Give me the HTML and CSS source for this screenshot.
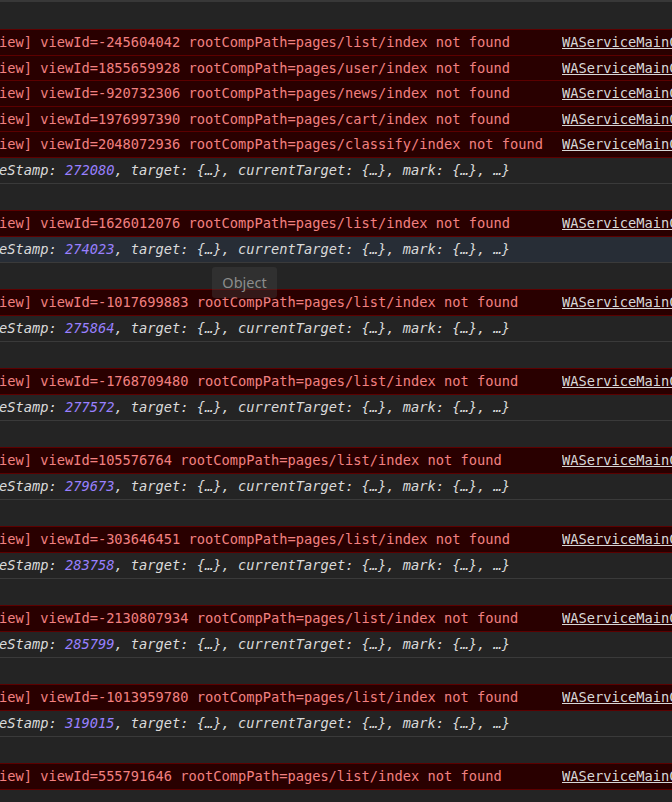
FILE: index.html
```html
<!DOCTYPE html>
<html lang="en">
<head>
    <meta charset="UTF-8">
    <meta name="viewport" content="width=device-width, initial-scale=1.0">
    <title>Console</title>
    <link rel="stylesheet" href="styles.css">
</head>
<body>
<div class="console">
    <div class="top-edge"></div>
    <div class="blank first"></div>

    <div class="msg err"><span class="text">iew] viewId=-245604042 rootCompPath=pages/list/index not found</span><a class="src" href="#">WAServiceMainContext.js:1</a></div>
    <div class="msg err"><span class="text">iew] viewId=1855659928 rootCompPath=pages/user/index not found</span><a class="src" href="#">WAServiceMainContext.js:1</a></div>
    <div class="msg err"><span class="text">iew] viewId=-920732306 rootCompPath=pages/news/index not found</span><a class="src" href="#">WAServiceMainContext.js:1</a></div>
    <div class="msg err"><span class="text">iew] viewId=1976997390 rootCompPath=pages/cart/index not found</span><a class="src" href="#">WAServiceMainContext.js:1</a></div>
    <div class="msg err"><span class="text">iew] viewId=2048072936 rootCompPath=pages/classify/index not found</span><a class="src" href="#">WAServiceMainContext.js:1</a></div>
    <div class="msg info"><span class="text">eStamp: <span class="num">272080</span>, target: {…}, currentTarget: {…}, mark: {…}, …}</span></div>
    <div class="blank"></div>

    <div class="msg err"><span class="text">iew] viewId=1626012076 rootCompPath=pages/list/index not found</span><a class="src" href="#">WAServiceMainContext.js:1</a></div>
    <div class="msg info hover"><span class="text">eStamp: <span class="num">274023</span>, target: {…}, currentTarget: {…}, mark: {…}, …}</span></div>
    <div class="blank"></div>

    <div class="msg err"><span class="text">iew] viewId=-1017699883 rootCompPath=pages/list/index not found</span><a class="src" href="#">WAServiceMainContext.js:1</a></div>
    <div class="msg info"><span class="text">eStamp: <span class="num">275864</span>, target: {…}, currentTarget: {…}, mark: {…}, …}</span></div>
    <div class="blank"></div>

    <div class="msg err"><span class="text">iew] viewId=-1768709480 rootCompPath=pages/list/index not found</span><a class="src" href="#">WAServiceMainContext.js:1</a></div>
    <div class="msg info"><span class="text">eStamp: <span class="num">277572</span>, target: {…}, currentTarget: {…}, mark: {…}, …}</span></div>
    <div class="blank"></div>

    <div class="msg err"><span class="text">iew] viewId=105576764 rootCompPath=pages/list/index not found</span><a class="src" href="#">WAServiceMainContext.js:1</a></div>
    <div class="msg info"><span class="text">eStamp: <span class="num">279673</span>, target: {…}, currentTarget: {…}, mark: {…}, …}</span></div>
    <div class="blank"></div>

    <div class="msg err"><span class="text">iew] viewId=-303646451 rootCompPath=pages/list/index not found</span><a class="src" href="#">WAServiceMainContext.js:1</a></div>
    <div class="msg info"><span class="text">eStamp: <span class="num">283758</span>, target: {…}, currentTarget: {…}, mark: {…}, …}</span></div>
    <div class="blank"></div>

    <div class="msg err"><span class="text">iew] viewId=-2130807934 rootCompPath=pages/list/index not found</span><a class="src" href="#">WAServiceMainContext.js:1</a></div>
    <div class="msg info"><span class="text">eStamp: <span class="num">285799</span>, target: {…}, currentTarget: {…}, mark: {…}, …}</span></div>
    <div class="blank"></div>

    <div class="msg err"><span class="text">iew] viewId=-1013959780 rootCompPath=pages/list/index not found</span><a class="src" href="#">WAServiceMainContext.js:1</a></div>
    <div class="msg info"><span class="text">eStamp: <span class="num">319015</span>, target: {…}, currentTarget: {…}, mark: {…}, …}</span></div>
    <div class="blank"></div>

    <div class="msg err"><span class="text">iew] viewId=555791646 rootCompPath=pages/list/index not found</span><a class="src" href="#">WAServiceMainContext.js:1</a></div>

    <!-- hover tooltip over the preview -->
    <div class="tooltip">Object</div>
</div>
</body>
</html>
```

FILE: styles.css
```css
html, body {
    margin: 0;
    padding: 0;
    background-color: #242424;
    overflow: hidden;
}

.console {
    position: relative;
    display: flex;
    flex-direction: column;
    font-family: "DejaVu Sans Mono", "Liberation Mono", monospace;
    font-size: 13.7px;
    color: #d4d4d4;
}

.top-edge {
    height: 2px;
    background-color: #383838;
}

.blank {
    height: 26.5px;
    flex-shrink: 0;
}

.blank.first {
    height: 27px;
}

.msg {
    box-sizing: border-box;
    display: grid;
    grid-template-columns: 562px 1fr;
    align-items: center;
    flex-shrink: 0;
    white-space: nowrap;
    overflow: hidden;
}

.msg .text {
    margin-left: -1px;
    overflow: hidden;
}

.err {
    height: 26.5px;
    background-color: #290000;
    border-top: 1px solid #5c0000;
    border-bottom: 1px solid #5c0000;
    color: #f28080;
}

.err + .err {
    margin-top: -1px;
}

.info {
    height: 26px;
    border-bottom: 1px solid #3a3a3a;
    font-style: italic;
    color: #dadada;
}

.info.hover {
    background-color: #272d36;
}

.num {
    color: #9980ff;
}

.src {
    color: #d8d8d8;
    text-decoration: underline;
    overflow: hidden;
}

.tooltip {
    position: absolute;
    left: 212px;
    top: 267px;
    width: 65px;
    height: 31px;
    box-sizing: border-box;
    border-radius: 3px;
    background-color: rgba(72, 72, 72, 0.35);
    color: #8c8c8c;
    font-family: "Noto Sans", "Open Sans", sans-serif;
    font-style: normal;
    font-size: 14.5px;
    line-height: 31px;
    text-align: center;
}
```
